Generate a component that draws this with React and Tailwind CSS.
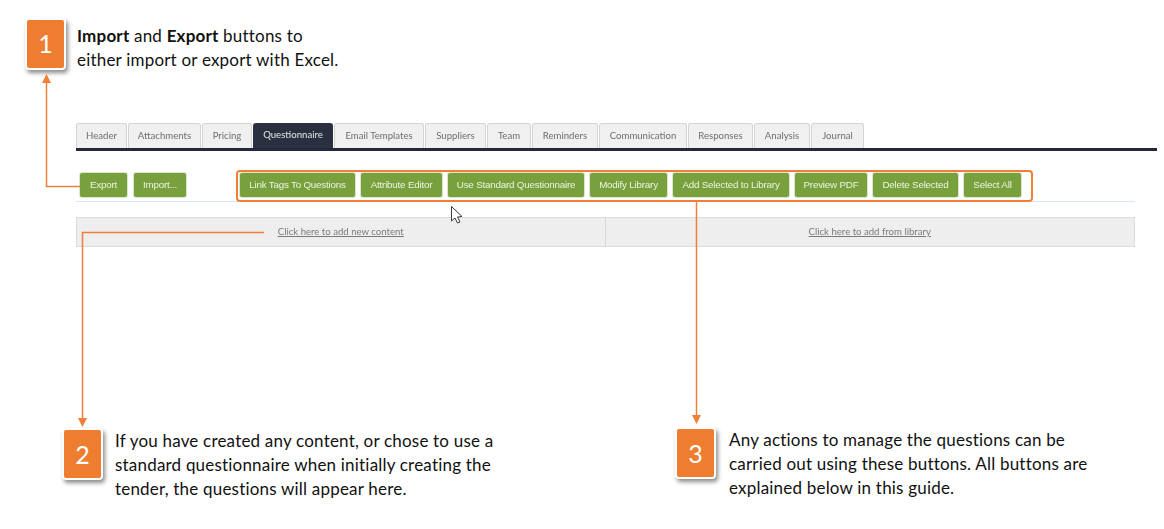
import React from "react";

const tabs = [
  { label: "Header", width: "w-[51px]" },
  { label: "Attachments", width: "w-[73px]" },
  { label: "Pricing", width: "w-[50px]" },
  { label: "Questionnaire", width: "w-[80px]", active: true },
  { label: "Email Templates", width: "w-[90px]" },
  { label: "Suppliers", width: "w-[61px]" },
  { label: "Team", width: "w-[44px]" },
  { label: "Reminders", width: "w-[66px]" },
  { label: "Communication", width: "w-[88px]" },
  { label: "Responses", width: "w-[65px]" },
  { label: "Analysis", width: "w-[56px]" },
  { label: "Journal", width: "w-[53px]" },
];

const actions = [
  { label: "Link Tags To Questions", width: "w-[115px]" },
  { label: "Attribute Editor", width: "w-[81px]" },
  { label: "Use Standard Questionnaire", width: "w-[136px]" },
  { label: "Modify Library", width: "w-[77px]" },
  { label: "Add Selected to Library", width: "w-[116px]" },
  { label: "Preview PDF", width: "w-[72px]" },
  { label: "Delete Selected", width: "w-[85px]" },
  { label: "Select All", width: "w-[57px]" },
];

const GreenButton = ({ label, width }) => (
  <button className={`${width} h-[24px] shrink-0 rounded-[2px] bg-[#78a03c] text-center font-['Liberation_Sans',sans-serif] text-[9.8px] tracking-[-0.2px] text-[#eef3e4] shadow-[0_0_0_1px_#dce6cd]`}>
    {label}
  </button>
);

const Badge = ({ number }) => (
  <div className="flex h-[52px] w-[41px] shrink-0 items-center justify-center rounded-[4px] border-2 border-white bg-[#ef7d30] text-[25px] text-white shadow-[2px_3px_4px_rgba(0,0,0,0.45)]">
    {number}
  </div>
);

const LeaderLines = () => (
  <svg className="pointer-events-none absolute left-0 top-0" width="1164" height="529" fill="none">
    <g stroke="#f08038" strokeWidth="1.5">
      <path d="M80 186.5H46.5V80" />
      <path d="M264 232.5H82.5V420" />
      <path d="M696.5 202V418" />
    </g>
    <g fill="#f08038">
      <path d="M42 83L46.5 74L51 83Z" />
      <path d="M78 418L82.5 427L87 418Z" />
      <path d="M692 415L696.5 424L701 415Z" />
    </g>
    <path d="M451.5 206.5V221L455 218L457.5 223L460 222L457.5 217L462 216.5Z" fill="#fff" stroke="#3a3a3a" strokeWidth="1" />
  </svg>
);

const App = () => {
  return (
    <div className="relative flex h-[529px] w-[1164px] flex-col overflow-hidden bg-white font-['Lato',sans-serif] text-[#111]">
      <div className="flex h-[105px] gap-[11px] pl-[25px] pt-[18px]">
        <Badge number="1" />
        <p className="mt-[6px] text-[17px] leading-[24.4px] tracking-[0.2px]">
          <b className="font-bold">Import</b> and <b className="font-bold">Export</b> buttons to
          <br />
          either import or export with Excel.
        </p>
      </div>

      <div className="mt-[18px] blur-[0.4px]">
        <div className="ml-[76px] flex w-[1081px] gap-px border-b-[3px] border-[#23283a] text-[9.6px]">
          {tabs.map((tab) => (
            <div
              key={tab.label}
              className={`${tab.width} flex h-[25px] shrink-0 items-center justify-center rounded-t-[3px] ${
                tab.active ? "bg-[#2b3040] text-[#e4e6ea]" : "border border-b-0 border-[#d4d4d4] bg-[#f0f0f0] text-[#6e6e6e]"
              }`}
            >
              {tab.label}
            </div>
          ))}
        </div>

        <div className="ml-[76px] mt-[19px] flex h-[32px] w-[1059px] items-start border-b border-[#d6e6f7] pl-[4px]">
          <div className="mt-[3px] flex gap-[7px]">
            <GreenButton label="Export" width="w-[47px]" />
            <GreenButton label="Import..." width="w-[52px]" />
          </div>
          <div className="ml-[50px] flex h-[32px] w-[797px] gap-[6px] rounded-[4px] border-2 border-[#f08038] pl-[2px] pt-[1px]">
            {actions.map((action) => (
              <GreenButton key={action.label} {...action} />
            ))}
          </div>
        </div>

        <div className="ml-[76px] mt-[15px] grid h-[30px] w-[1059px] grid-cols-2 border border-[#dcdcdc] bg-[#eeeeee] text-[9.6px] text-[#7a7a7a]">
          <div className="flex items-center justify-center border-r border-[#d8d8d8] underline">Click here to add new content</div>
          <div className="flex items-center justify-center underline">Click here to add from library</div>
        </div>
      </div>

      <div className="mt-[181px] flex text-[17px] leading-[24.2px] tracking-[0.2px]">
        <div className="ml-[62px] flex w-[613px] gap-[12px]">
          <Badge number="2" />
          <p className="mt-[1px]">
            If you have created any content, or chose to use a
            <br />
            standard questionnaire when initially creating the
            <br />
            tender, the questions will appear here.
          </p>
        </div>
        <div className="-mt-px flex gap-[13px]">
          <Badge number="3" />
          <p className="mt-[1px]">
            Any actions to manage the questions can be
            <br />
            carried out using these buttons. All buttons are
            <br />
            explained below in this guide.
          </p>
        </div>
      </div>

      <LeaderLines />
    </div>
  );
};

export default App;
